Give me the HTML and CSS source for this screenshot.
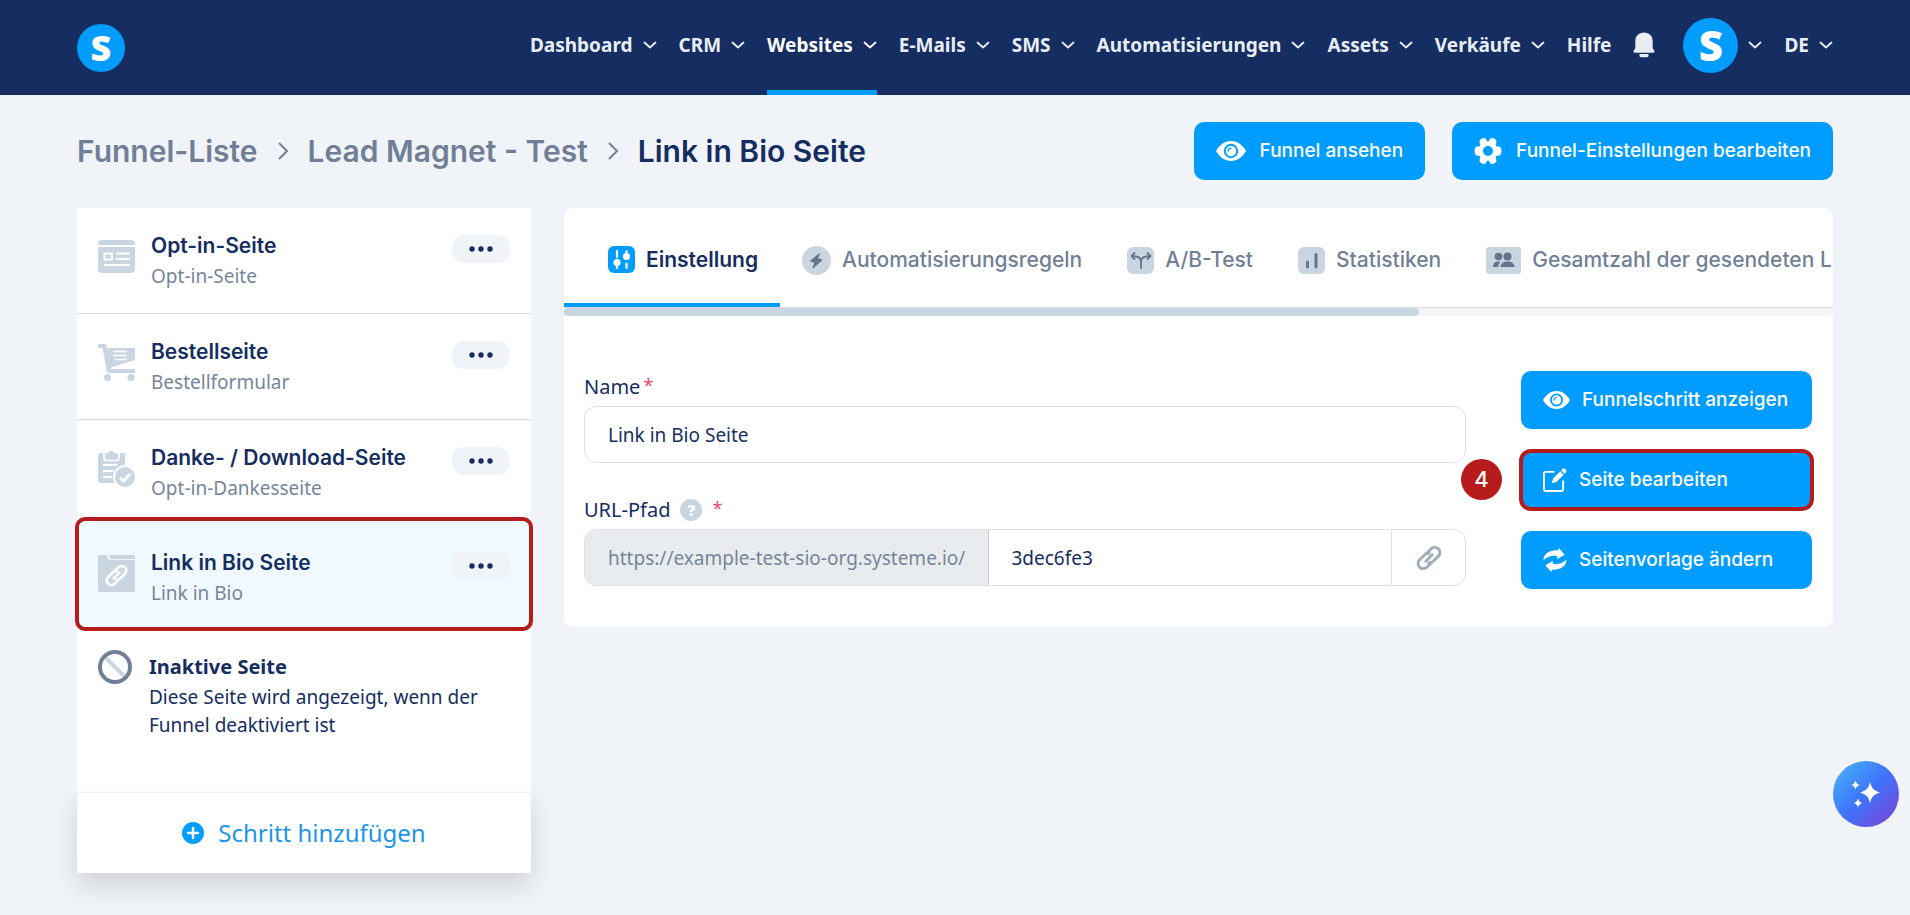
FILE: index.html
```
<!DOCTYPE html>
<html lang="de">
<head>
<meta charset="utf-8">
<title>Link in Bio Seite</title>
<link rel="stylesheet" href="styles.css">
</head>
<body>
<svg class="sprite" aria-hidden="true">
  <symbol id="chev" viewBox="0 0 14 14"><path d="M1.5 4.5l5.5 5 5.5-5" fill="none" stroke="currentColor" stroke-width="1.8" stroke-linecap="round" stroke-linejoin="round"/></symbol>
  <symbol id="eye" viewBox="0 0 30 22"><path fill="currentColor" fill-rule="evenodd" d="M15 1C8 1 3 6 .4 10.200a1.500 1.500 0 0 0 0 1.600C3 16 8 21 15 21s12-5 14.600-9.200a1.500 1.500 0 0 0 0-1.600C27 6 22 1 15 1zm0 2.800a7.200 7.200 0 1 1 0 14.400 7.200 7.200 0 0 1 0-14.400z"/><circle cx="15" cy="11" r="5.200" fill="currentColor"/><path d="M12.300 11.200a2.900 2.900 0 0 1 2.700-3" fill="none" stroke="#009dff" stroke-width="1.300" stroke-linecap="round"/></symbol>
  <symbol id="gear" viewBox="0 0 28 28"><path fill="currentColor" fill-rule="evenodd" d="M14 4.500c1.500 0 1.700-3.500 4-3.500 2 0 4.400 1.500 4.500 3.200.2 2-1.300 2.600-.6 4.200.7 1.500 2.100.7 3.600 1.200 1.500.6 2 2.800 2 4.400s-.5 3.800-2 4.400c-1.500.5-2.900-.3-3.600 1.200-.7 1.600.8 2.200.6 4.200-.1 1.700-2.500 3.200-4.500 3.200-2.300 0-2.500-3.500-4-3.500s-1.700 3.500-4 3.500c-2 0-4.400-1.500-4.500-3.200-.2-2 1.300-2.600.6-4.200-.7-1.500-2.100-.7-3.600-1.200C1 17.800.5 15.600.5 14s.5-3.800 2-4.400c1.500-.5 2.900.3 3.600-1.200.7-1.600-.8-2.200-.6-4.200C5.600 2.500 8 1 10 1c2.300 0 2.500 3.500 4 3.500zM14 9a5 5 0 1 0 0 10 5 5 0 0 0 0-10z"/></symbol>
  <symbol id="link" viewBox="0 0 28 28"><g fill="none" stroke="currentColor" stroke-width="3" stroke-linecap="round"><path d="M12 9l4.500-4.500a5.200 5.200 0 0 1 7.300 7.300L18 17.500a5 5 0 0 1-4 1.300"/><path d="M16 19l-4.500 4.500a5.200 5.200 0 0 1-7.300-7.300L10 10.500a5 5 0 0 1 4-1.300"/><path d="M10.800 17.200l6.400-6.400"/></g></symbol>
  <symbol id="dots" viewBox="0 0 24 6"><circle cx="3" cy="3" r="2.700"/><circle cx="12" cy="3" r="2.700"/><circle cx="21" cy="3" r="2.700"/></symbol>
</svg>

<header class="topbar">
  <a class="logo" href="#" aria-label="systeme.io">S</a>
  <nav class="nav">
    <a class="nav-item" href="#">Dashboard<svg class="chev"><use href="#chev"/></svg></a>
    <a class="nav-item" href="#">CRM<svg class="chev"><use href="#chev"/></svg></a>
    <a class="nav-item active" href="#">Websites<svg class="chev"><use href="#chev"/></svg></a>
    <a class="nav-item" href="#">E-Mails<svg class="chev"><use href="#chev"/></svg></a>
    <a class="nav-item" href="#">SMS<svg class="chev"><use href="#chev"/></svg></a>
    <a class="nav-item" href="#">Automatisierungen<svg class="chev"><use href="#chev"/></svg></a>
    <a class="nav-item" href="#">Assets<svg class="chev"><use href="#chev"/></svg></a>
    <a class="nav-item" href="#">Verkäufe<svg class="chev"><use href="#chev"/></svg></a>
    <a class="nav-item" href="#">Hilfe</a>
    <button class="bell" type="button" aria-label="Benachrichtigungen"><svg viewBox="0 0 22 26"><path d="M11 .5C6 .5 2.300 4 2.300 9v6c0 1.500-.8 2.500-1.500 3.500-.7 1-.3 2.200 1 2.200h18.400c1.300 0 1.700-1.200 1-2.200-.7-1-1.500-2-1.500-3.500V9c0-5-3.700-8.500-8.700-8.500zM6.500 22h9v1.500c0 1-.5 1.700-1.500 1.700H8c-1 0-1.500-.7-1.500-1.700z" fill="currentColor"/></svg></button>
    <button class="account" type="button" aria-label="Konto"><span class="avatar">S</span><svg class="chev"><use href="#chev"/></svg></button>
    <button class="nav-item" type="button">DE<svg class="chev"><use href="#chev"/></svg></button>
  </nav>
</header>

<main class="page">
  <div class="head">
    <nav class="crumbs">
      <a href="#">Funnel-Liste</a>
      <svg class="sep" viewBox="0 0 12 18"><path d="M2 1l8 8-8 8"/></svg>
      <a href="#">Lead Magnet - Test</a>
      <svg class="sep" viewBox="0 0 12 18"><path d="M2 1l8 8-8 8"/></svg>
      <h1>Link in Bio Seite</h1>
    </nav>
    <div class="head-actions">
      <button class="btn" type="button"><svg class="i-eye"><use href="#eye"/></svg>Funnel ansehen</button>
      <button class="btn" type="button"><svg class="i-gear"><use href="#gear"/></svg>Funnel-Einstellungen bearbeiten</button>
    </div>
  </div>

  <div class="columns">
    <aside class="steps">
      <ul class="step-list">
        <li class="step">
          <svg class="step-icon" viewBox="0 0 37 37"><path fill="#cad5e2" d="M4 2h29a4 4 0 0 1 4 4v1H0V6a4 4 0 0 1 4-4zM0 9h37v22a4 4 0 0 1-4 4H4a4 4 0 0 1-4-4z"/><path d="M6.500 15.500h7.500v6H6.500zM18 15.500h14M18 21h14M6 27h26" fill="none" stroke="#fff" stroke-width="2"/></svg>
          <div class="step-text"><a class="step-title" href="#">Opt-in-Seite</a><span class="step-sub">Opt-in-Seite</span></div>
          <button class="more" type="button" aria-label="Mehr"><svg><use href="#dots"/></svg></button>
        </li>
        <li class="step">
          <svg class="step-icon" viewBox="0 0 37 37"><path fill="#cad5e2" d="M1.500 0H7q1 0 1.300 1L9 4h28v12L13 23.500l-.3 1.500H37v4H9.500L9 28 4.500 4h-3a1.800 1.800 0 0 1 0-4z"/><circle cx="9.500" cy="33.500" r="3.500" fill="#cad5e2"/><circle cx="33" cy="33.500" r="3.500" fill="#cad5e2"/><path d="M15 7.500h14M15 11.500h14M16 15.500h13" stroke="#fff" stroke-width="1.400"/></svg>
          <div class="step-text"><a class="step-title" href="#">Bestellseite</a><span class="step-sub">Bestellformular</span></div>
          <button class="more" type="button" aria-label="Mehr"><svg><use href="#dots"/></svg></button>
        </li>
        <li class="step">
          <svg class="step-icon" viewBox="0 0 37 37"><path fill="#cad5e2" d="M3 3h24v30H3a3 3 0 0 1-3-3V6a3 3 0 0 1 3-3z"/><path d="M5 15h14M5 21h11M5 27h9" stroke="#fff" stroke-width="2"/><path fill="#cad5e2" stroke="#fff" stroke-width="1.600" d="M6 2.500h3.500a4 4 0 0 1 7.500 0H21V8a3 3 0 0 1-3 2.500H9A3 3 0 0 1 6 8z"/><circle cx="27" cy="27" r="11" fill="#cad5e2" stroke="#fff" stroke-width="2"/><path d="M22 27.500l3.500 3.500 6.500-7" fill="none" stroke="#fff" stroke-width="3"/></svg>
          <div class="step-text"><a class="step-title" href="#">Danke- / Download-Seite</a><span class="step-sub">Opt-in-Dankesseite</span></div>
          <button class="more" type="button" aria-label="Mehr"><svg><use href="#dots"/></svg></button>
        </li>
        <li class="step selected">
          <svg class="step-icon" viewBox="0 0 37 37"><path fill="#cad5e2" d="M2 0h6.500l2.500 5h26v30a2 2 0 0 1-2 2H2a2 2 0 0 1-2-2V2a2 2 0 0 1 2-2zM11 0h24a2 2 0 0 1 2 2v2H12.500z"/><svg x="6" y="8" width="25" height="25" color="#fff"><use href="#link"/></svg></svg>
          <div class="step-text"><a class="step-title" href="#">Link in Bio Seite</a><span class="step-sub">Link in Bio</span></div>
          <button class="more" type="button" aria-label="Mehr"><svg><use href="#dots"/></svg></button>
        </li>
      </ul>
      <div class="inactive">
        <svg class="inactive-icon" viewBox="0 0 34 34"><path d="M8 8l18 18" stroke="#cad5e2" stroke-width="4"/><circle cx="17" cy="17" r="15" fill="none" stroke="#717f96" stroke-width="4"/></svg>
        <div><h2>Inaktive Seite</h2><p>Diese Seite wird angezeigt, wenn der Funnel deaktiviert ist</p></div>
      </div>
      <button class="add" type="button"><svg viewBox="0 0 22 22"><circle cx="11" cy="11" r="11" fill="#009dff"/><path d="M11 6v10M6 11h10" stroke="#fff" stroke-width="2.400" stroke-linecap="round"/></svg>Schritt hinzufügen</button>
    </aside>

    <section class="card">
      <div class="tabs">
        <a class="tab current" href="#"><svg class="t-sq" viewBox="0 0 27 27"><rect width="27" height="27" rx="6" fill="#009dff"/><g stroke="#fff" stroke-width="2.200" stroke-linecap="round"><path d="M9 5v6M9 16v6M18.500 5v4M18.500 17.500V22"/></g><circle cx="9" cy="16.500" r="3.600" fill="#fff"/><circle cx="18.500" cy="10.500" r="3.600" fill="#fff"/></svg>Einstellung</a>
        <a class="tab" href="#"><svg class="t-round" viewBox="0 0 29 29"><circle cx="14.500" cy="14.500" r="14.500" fill="#cad5e2"/><path d="M17.500 7.500l-9 7.500 4.500 1.500-2 5.500 9-8-4.500-1.500z" fill="#64748b" stroke="#64748b" stroke-linejoin="round"/></svg>Automatisierungsregeln</a>
        <a class="tab" href="#"><svg class="t-sq" viewBox="0 0 27 27"><rect width="27" height="27" rx="6" fill="#cad5e2"/><path d="M14 21v-6.500C14 11 11 9 5 9M14 14.500C14 11 17 9 23 9M7.500 6L4.500 9l3 3M20.500 6l3 3-3 3" fill="none" stroke="#64748b" stroke-width="1.800" stroke-linecap="round" stroke-linejoin="round"/></svg>A/B-Test</a>
        <a class="tab" href="#"><svg class="t-sq" viewBox="0 0 27 27"><rect width="27" height="27" rx="6" fill="#cad5e2"/><path d="M9.500 15v5M18 7.500V20" stroke="#64748b" stroke-width="3" stroke-linecap="round"/></svg>Statistiken</a>
        <a class="tab" href="#"><svg class="t-wide" viewBox="0 0 35 27"><rect width="35" height="27" rx="3" fill="#cad5e2"/><g fill="#64748b"><circle cx="12.500" cy="9.500" r="3.800"/><path d="M7 20c0-3.500 2-5.500 5.500-5.500 1 0 1.500.2 2 .4-1.500 1.300-2.300 3-2.300 5.100z"/><circle cx="21.500" cy="9.500" r="4"/><path d="M14.500 20c0-3.500 3-5.500 7-5.500s7 2 7 5.500z"/></g></svg>Gesamtzahl der gesendeten L</a>
      </div>
      <div class="scroll"><div class="thumb"></div></div>

      <div class="body">
        <form class="form">
          <label class="label" for="name">Name<sup>*</sup></label>
          <input class="field" id="name" value="Link in Bio Seite">
          <label class="label url" for="path">URL-Pfad<span class="help">?</span><sup>*</sup></label>
          <div class="group">
            <span class="prefix">https://example-test-sio-org.systeme.io/</span>
            <input id="path" value="3dec6fe3">
            <button type="button" aria-label="Link kopieren"><svg><use href="#link"/></svg></button>
          </div>
        </form>
        <div class="side">
          <button class="btn" type="button"><svg class="i-eye small"><use href="#eye"/></svg>Funnelschritt anzeigen</button>
          <div class="marked">
            <span class="badge">4</span>
            <button class="btn" type="button"><svg class="i-edit" viewBox="0 0 25 25"><path d="M12 4H3a2 2 0 0 0-2 2v16a2 2 0 0 0 2 2h16a2 2 0 0 0 2-2V13" fill="none" stroke="currentColor" stroke-width="2"/><path fill="currentColor" d="M9 16l1.500-5L18 3.500 21.500 7 14 14.500zM19 2.500l1.500-1.600a1.600 1.600 0 0 1 2.200 0l1.300 1.300a1.600 1.600 0 0 1 0 2.200L22.500 6z"/></svg>Seite bearbeiten</button>
          </div>
          <button class="btn" type="button"><svg class="i-edit" viewBox="0 0 24 25"><g fill="currentColor"><path id="arrow" d="M0 13C0 5.500 7 2 15 2.500L16 0l6 7-7.500 4.500-.3-3C9 7.500 3.500 9 0 13z"/><use href="#arrow" transform="rotate(180 12 12.500)"/></g></svg>Seitenvorlage ändern</button>
        </div>
      </div>
    </section>
  </div>
</main>

<button class="fab" type="button" aria-label="KI-Assistent"><svg viewBox="0 0 30 28"><g fill="#fff"><path d="M19 2c1.500 6 3.500 8.500 10 10.500-6.500 2-8.500 4.500-10 10.500-1.500-6-3.500-8.500-10-10.500C15.500 10.500 17.500 8 19 2z"/><path d="M4.500.5C5.300 3.300 6.300 4.300 9 5 6.300 5.700 5.300 6.700 4.500 9.500 3.700 6.700 2.700 5.700 0 5c2.700-.7 3.700-1.700 4.500-4.500zM7 18.500c.8 2.800 1.800 3.800 4.500 4.500-2.700.7-3.700 1.700-4.500 4.500-.8-2.800-1.800-3.800-4.500-4.500 2.700-.7 3.700-1.700 4.500-4.500z"/></g></svg></button>
</body>
</html>
```

FILE: styles.css
```
* { box-sizing: border-box; }
body {
  margin: 0;
  min-height: 100vh;
  background: #f0f4f9;
  color: #162d61;
  font: 19px/28px "Noto Sans", sans-serif;
}
a { color: inherit; text-decoration: none; }
button, input { font: inherit; color: inherit; margin: 0; }
button { border: 0; background: none; padding: 0; cursor: pointer; }
svg { display: block; flex: none; }
.sprite { position: absolute; width: 0; height: 0; }

.topbar {
  display: flex;
  align-items: flex-start;
  justify-content: space-between;
  height: 95px;
  padding: 0 77px;
  background: #162d61;
  color: #e8edf4;
}
.logo, .avatar {
  display: flex;
  align-items: center;
  justify-content: center;
  border-radius: 50%;
  background: #009dff;
  color: #fff;
  font-family: "Open Sans", sans-serif;
  font-weight: 800;
}
.logo { width: 48px; height: 48px; margin-top: 24px; font-size: 36px; }
.avatar { width: 55px; height: 55px; font-size: 42px; }
.nav { display: flex; height: 95px; gap: 22px; }
.nav-item, .bell, .account {
  display: flex;
  align-items: center;
  gap: 10px;
  height: 95px;
  border-bottom: 5px solid transparent;
}
.nav-item { font-weight: 700; white-space: nowrap; }
.nav-item.active { color: #fff; border-color: #009dff; }
.chev { width: 14px; height: 14px; }
.bell svg { width: 22px; height: 26px; }
.account { margin-left: 6px; }

.page { padding: 27px 77px 42px; }
.head { display: flex; justify-content: space-between; align-items: center; margin-bottom: 28px; }
.crumbs {
  display: flex;
  align-items: center;
  gap: 19px;
  font: 600 30px/40px Inter, sans-serif;
  color: #717f96;
}
.crumbs h1 { margin: 0; font: inherit; color: #162d61; }
.sep { width: 12px; height: 18px; fill: none; stroke: #717f96; stroke-width: 2; }
.head-actions { display: flex; gap: 27px; }
.head-actions .btn { gap: 14px; }
.btn {
  display: flex;
  align-items: center;
  gap: 12px;
  height: 58px;
  padding: 0 22px;
  border-radius: 10px;
  background: #009dff;
  color: #fff;
  font: 500 19px/28px Inter, sans-serif;
  white-space: nowrap;
}
.i-eye { width: 30px; height: 22px; }
.i-eye.small { width: 27px; height: 20px; }
.i-gear { width: 28px; height: 28px; }
.i-edit { width: 24px; height: 24px; }

.columns { display: flex; align-items: flex-start; gap: 33px; }
.steps { width: 454px; flex: none; background: #fff; }
.step-list { margin: 0; padding: 0; list-style: none; }
.step {
  display: flex;
  align-items: flex-start;
  height: 106px;
  padding: 24px 21px 0;
  border-bottom: 1px solid #d3d6db;
}
.step:nth-child(3) { height: 99px; border-color: transparent; }
.step-icon { width: 37px; height: 37px; margin: 6px 16px 0 0; }
.step-text { flex: 1; display: flex; flex-direction: column; gap: 2px; }
.step-title { font: 600 21px/28px Inter, sans-serif; }
.step-sub { color: #76859a; }
.more {
  display: flex;
  align-items: center;
  justify-content: center;
  width: 58px;
  height: 28px;
  margin-top: 3px;
  border-radius: 12px;
  background: #f0f4f9;
}
.more svg { width: 24px; height: 6px; fill: #162d61; }
.step.selected {
  height: 110px;
  padding-top: 30px;
  background: #f0f9ff;
  border: 0;
  outline: 4px solid #b71c1c;
  outline-offset: -2px;
  border-radius: 8px;
}
.inactive { display: flex; gap: 17px; padding: 21px 21px 53px; }
.inactive-icon { width: 34px; height: 34px; }
.inactive h2 { margin: 3px 0 0; font-size: 20px; font-weight: 700; line-height: 28px; }
.inactive p { margin: 2px 0 0; }
.add {
  display: flex;
  align-items: center;
  justify-content: center;
  gap: 14px;
  width: 100%;
  height: 81px;
  border-top: 1px solid #eceef1;
  background: #fff;
  box-shadow: 0 12px 24px rgba(0, 0, 0, 0.14);
  color: #1c94ea;
  font-size: 24px;
}
.add svg { width: 22px; height: 22px; }

.card { flex: 1; min-width: 0; border-radius: 10px; background: #fff; overflow: hidden; }
.tabs { display: flex; height: 100px; overflow: hidden; border-bottom: 1px solid #d8dbe0; }
.tab {
  display: flex;
  align-items: center;
  gap: 11px;
  flex: none;
  padding: 9px 23px 0 22px;
  border-bottom: 4px solid transparent;
  color: #717f96;
  font: 500 21px/28px Inter, sans-serif;
}
.tab.current { padding: 8px 22px 0 44px; color: #162d61; border-color: #009dff; font-weight: 600; }
.t-sq { width: 27px; height: 27px; }
.t-round { width: 29px; height: 29px; }
.t-wide { width: 35px; height: 27px; }
.scroll { height: 8px; border-radius: 4px; background: #f5f5f6; }
.thumb { width: 67.4%; height: 8px; border-radius: 4px; background: #cad5e2; }

.body { display: flex; gap: 55px; padding: 55px 21px 38px 20px; }
.form { flex: 1; min-width: 0; }
.label { display: flex; align-items: center; height: 32px; margin-bottom: 3px; font-size: 20px; }
.label sup { margin: 0 0 4px 3px; font-size: 18px; line-height: 18px; color: #e8476a; }
.label.url { margin-top: 31px; }
.label.url sup { margin-left: 10px; }
.help {
  width: 22px;
  height: 22px;
  margin-left: 10px;
  border-radius: 50%;
  background: #cad5e2;
  color: #fff;
  font-size: 15px;
  font-weight: 900;
  line-height: 22px;
  text-align: center;
}
.field, .group { width: 100%; height: 57px; border: 1px solid #dee1e5; border-radius: 12px; background: #fff; }
.field { padding: 0 23px; }
.group { display: flex; overflow: hidden; }
.prefix {
  display: flex;
  align-items: center;
  padding: 0 23px;
  border: 1px solid #c3cad1;
  border-radius: 11px 0 0 11px;
  margin: -1px 0 -1px -1px;
  background: #e9ecef;
  color: #76859a;
}
.group input { flex: 1; min-width: 0; padding: 0 22px; border: 0; background: none; }
.group button {
  display: flex;
  align-items: center;
  justify-content: center;
  width: 74px;
  border-left: 1px solid #dee1e5;
  color: #a0adba;
}
.group button svg { width: 28px; height: 28px; }
.side { display: flex; flex-direction: column; gap: 22px; width: 291px; }
.side .btn { width: 100%; }
.marked { position: relative; border-radius: 10px; }
.marked .btn { outline: 4px solid #b71c1c; outline-offset: -2px; }
.badge {
  position: absolute;
  right: 100%;
  top: 8px;
  width: 41px;
  height: 41px;
  margin-right: 19px;
  border-radius: 50%;
  background: #b71c1c;
  color: #fff;
  font: 500 22px/41px Inter, sans-serif;
  text-align: center;
}
.fab {
  position: fixed;
  right: 11px;
  bottom: 88px;
  display: flex;
  align-items: center;
  justify-content: center;
  width: 66px;
  height: 66px;
  border-radius: 50%;
  background: linear-gradient(135deg, #45aaf5 10%, #3f74fb 50%, #7a43d6 95%);
}
.fab svg { width: 30px; height: 28px; }
```
